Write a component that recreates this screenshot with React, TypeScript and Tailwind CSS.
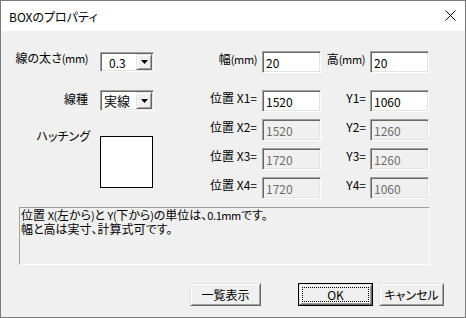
const font = "font-['Noto_Sans_CJK_JP','Noto_Sans',sans-serif] [font-feature-settings:'palt']";

const sunken =
  "border border-t-[#a0a0a0] border-l-[#a0a0a0] border-b-white border-r-white shadow-[inset_1px_1px_0_#696969,inset_-1px_-1px_0_#e3e3e3]";

const raised =
  "border border-t-[#e3e3e3] border-l-[#e3e3e3] border-b-[#696969] border-r-[#696969] shadow-[inset_1px_1px_0_#ffffff,inset_-1px_-1px_0_#a0a0a0]";

// narrow latin run, close to the width the dialog font gives
function Lat({ children }: { children: string }) {
  return <span className="inline-block text-[11px] leading-[13px] tracking-[-0.4px]">{children}</span>;
}

function Combo({ value, pad }: { value: string; pad: string }) {
  return (
    <div className={`flex h-full w-[54px] bg-white ${sunken} p-[1px]`}>
      <div className={`flex flex-1 items-center ${pad} leading-[13px]`}>{value}</div>
      <div className={`flex w-[16px] items-center justify-center bg-[#f0f0f0] ${raised}`}>
        <svg width="7" height="4" viewBox="0 0 7 4">
          <path d="M0 0h7L3.5 4z" fill="#000" />
        </svg>
      </div>
    </div>
  );
}

function Edit({ value, disabled }: { value: string; disabled?: boolean }) {
  return (
    <div
      className={`flex h-[22px] w-[59px] items-center pl-[3px] leading-[13px] ${sunken} ${
        disabled ? "bg-[#f0f0f0] text-[#6d6d6d]" : "bg-white text-black"
      }`}
    >
      {value}
    </div>
  );
}

function Label({ children, pad }: { children: React.ReactNode; pad: string }) {
  return (
    <div className={`mt-[1px] self-start text-right leading-[13px] whitespace-nowrap ${pad}`}>
      {children}
    </div>
  );
}

const rows = [
  { n: 1, x: "1520", y: "1060", disabled: false },
  { n: 2, x: "1520", y: "1260", disabled: true },
  { n: 3, x: "1720", y: "1260", disabled: true },
  { n: 4, x: "1720", y: "1060", disabled: true },
];

export default function App() {
  return (
    <div
      className={`flex h-[318px] w-[466px] flex-col border border-[#7a7a7a] bg-[#f0f0f0] text-[12px] text-black ${font}`}
    >
      {/* title bar */}
      <div className="flex h-[30px] items-center justify-between bg-white pl-[8px] pr-[9px]">
        <span className="leading-[13px]">BOXのプロパティ</span>
        <svg width="11" height="11" viewBox="0 0 11 11" className="mt-[-1px]">
          <path d="M0.5 0.5l10 10M10.5 0.5l-10 10" stroke="#000" strokeWidth="1" />
        </svg>
      </div>

      <div className="flex flex-1 flex-col">
        <div className="flex h-[168px]">
          {/* left side */}
          <div className="flex w-[200px] flex-col pt-[21px]">
            <div className="flex h-[20px]">
              <div className="mt-[-1px] w-[87px] text-right leading-[13px] whitespace-nowrap">
                線の太さ<Lat>(mm)</Lat>
              </div>
              <div className="ml-[12px]">
                <Combo value="0.3" pad="pl-[7px]" />
              </div>
            </div>
            <div className="mt-[18px] flex h-[21px]">
              <div className="mt-[2px] w-[87px] text-right leading-[13px]">線種</div>
              <div className="ml-[12px]">
                <Combo value="実線" pad="pl-[2px] text-[13px]" />
              </div>
            </div>
            <div className="mt-[18px] flex">
              <div className="w-[89px] text-right leading-[13px]">ハッチング</div>
              <div className="ml-[10px] mt-[7px] h-[52px] w-[53px] border border-black bg-white" />
            </div>
          </div>

          {/* right side */}
          <div className="flex flex-col pt-[20px]">
            <div className="grid grid-cols-[61px_59px_49px_59px]">
              <Label pad="pr-[5px]">
                幅<Lat>(mm)</Lat>
              </Label>
              <Edit value="20" />
              <Label pad="pr-[5px]">
                高<Lat>(mm)</Lat>
              </Label>
              <Edit value="20" />
            </div>
            <div className="mt-[17px] grid grid-cols-[61px_59px_49px_59px] gap-y-[7px]">
              {rows.map((r) => (
                <div key={r.n} className="contents">
                  <Label pad="pr-[5px]">{`位置 X${r.n}=`}</Label>
                  <Edit value={r.x} disabled={r.disabled} />
                  <Label pad="pr-[4px]">{`Y${r.n}=`}</Label>
                  <Edit value={r.y} disabled={r.disabled} />
                </div>
              ))}
            </div>
          </div>
        </div>

        {/* info box */}
        <div className="ml-[18px] mt-[8px] h-[58px] w-[411px] border border-t-[#a0a0a0] border-l-[#a0a0a0] border-b-white border-r-white px-[1px] leading-[13px]">
          <p>
            位置 <Lat>X(</Lat>左から<Lat>)</Lat>と <Lat>Y(</Lat>下から<Lat>)</Lat>の単位は、
            <Lat>0.1mm</Lat>です。
          </p>
          <p>幅と高は実寸、計算式可です。</p>
        </div>

        {/* buttons */}
        <div className="mt-[18px] flex pl-[189px]">
          <button
            type="button"
            className={`flex h-[23px] w-[71px] items-center justify-center bg-[#f0f0f0] leading-[13px] ${raised}`}
          >
            一覧表示
          </button>
          <button
            type="button"
            className="ml-[37px] flex h-[23px] w-[75px] border border-black bg-[#f0f0f0]"
          >
            <div className={`flex flex-1 p-[2px] ${raised}`}>
              <div className="flex flex-1 items-center justify-center border border-dotted border-black leading-[13px]">
                OK
              </div>
            </div>
          </button>
          <button
            type="button"
            className={`ml-[6px] flex h-[23px] w-[65px] items-center justify-center bg-[#f0f0f0] leading-[13px] ${raised}`}
          >
            キャンセル
          </button>
        </div>
      </div>
    </div>
  );
}
